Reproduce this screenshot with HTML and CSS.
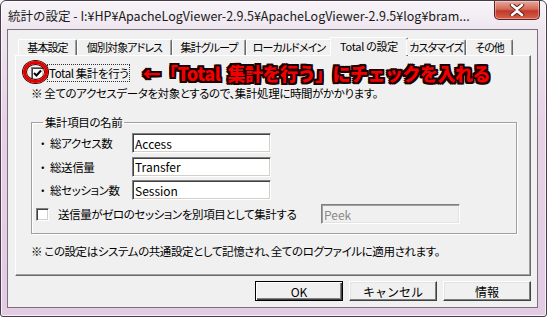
FILE: index.html
```html
<!DOCTYPE html>
<html lang="ja">
<head>
  <meta charset="UTF-8">
  <title>統計の設定</title>
  <link rel="stylesheet" href="styles.css">
</head>
<body>

  <div class="window">
    <div class="titlebar">
      <span class="title">統計の設定 - I:¥HP¥ApacheLogViewer-2.9.5¥ApacheLogViewer-2.9.5¥log¥bram...</span>
      <button class="close-btn" type="button">
        <svg width="16" height="12" viewBox="0 0 16 12">
          <path d="M3 1 L8 5 L13 1 M3 11 L8 7 L13 11" fill="none" stroke="#5a1a14" stroke-width="4.4" stroke-linecap="round"/>
          <path d="M3 1 L8 5 L13 1 M3 11 L8 7 L13 11" fill="none" stroke="#fff" stroke-width="2.6" stroke-linecap="round"/>
        </svg>
      </button>
    </div>

    <div class="client">
      <div class="tabs">
        <div class="tab" style="width: 59px">基本設定</div>
        <div class="tab" style="width: 95px">個別対象アドレス</div>
        <div class="tab" style="width: 74px">集計グループ</div>
        <div class="tab" style="width: 86px">ローカルドメイン</div>
        <div class="tab active" style="width: 78px">Total の設定</div>
        <div class="tab" style="width: 60px">カスタマイズ</div>
        <div class="tab" style="width: 47px">その他</div>
      </div>

      <div class="panel">
        <div class="check-row">
          <span class="checkbox checked">
            <svg width="9" height="9" viewBox="0 0 9 9"><path d="M1 4 L3.5 6.5 L8 1.5" fill="none" stroke="#000" stroke-width="2"/></svg>
          </span>
          <span class="focus-label">Total 集計を行う</span>
          <span class="red-circle"></span>
          <span class="annotation">←「Total&nbsp; 集計を行う」にチェックを入れる</span>
        </div>
        <p class="note">※ 全てのアクセスデータを対象とするので、集計処理に時間がかかります。</p>

        <fieldset class="group">
          <legend>集計項目の名前</legend>
          <div class="field-row">
            <label><span class="bullet">・</span>総アクセス数</label>
            <input class="text-input" type="text" value="Access">
          </div>
          <div class="field-row">
            <label><span class="bullet">・</span>総送信量</label>
            <input class="text-input" type="text" value="Transfer">
          </div>
          <div class="field-row">
            <label><span class="bullet">・</span>総セッション数</label>
            <input class="text-input" type="text" value="Session">
          </div>
          <div class="option-row">
            <span class="checkbox"></span>
            <span class="option-label">送信量がゼロのセッションを別項目として集計する</span>
            <input class="text-input disabled" type="text" value="Peek" disabled>
          </div>
        </fieldset>

        <p class="note bottom-note">※ この設定はシステムの共通設定として記憶され、全てのログファイルに適用されます。</p>
      </div>

      <div class="buttons">
        <button class="btn default" type="button">OK</button>
        <button class="btn" type="button">キャンセル</button>
        <button class="btn" type="button">情報</button>
      </div>
    </div>
  </div>

</body>
</html>
```

FILE: styles.css
```css
/* Reset */
* {
  margin: 0;
  padding: 0;
  box-sizing: border-box;
}

body {
  width: 547px;
  height: 317px;
  overflow: hidden;
  background: #fff;
  font-family: "Noto Sans CJK JP", sans-serif;
  font-size: 11.5px;
  letter-spacing: -0.4px;
  font-feature-settings: "palt";
  color: #000;
}

/* Window frame */
.window {
  width: 547px;
  height: 317px;
  border: 1px solid #4a3a4c;
  border-radius: 6px 6px 3px 3px;
  background: linear-gradient(180deg, #f7f4f8 0, #efe6f0 28px, #e6d2e6 120px, #e2cbe3 100%);
  box-shadow: inset 0 0 0 1px rgba(255, 255, 255, 0.7);
  display: flex;
  flex-direction: column;
}

.titlebar {
  height: 28px;
  display: flex;
  align-items: flex-start;
  justify-content: space-between;
  padding-left: 7px;
}

.title {
  margin-top: 5px;
  font-feature-settings: normal;
  font-size: 12.5px;
  letter-spacing: 0;
  color: #1a1a1a;
  white-space: nowrap;
}

.close-btn {
  width: 46px;
  height: 19px;
  margin-right: 6px;
  border: 1px solid #5c2220;
  border-top: none;
  border-radius: 0 0 5px 5px;
  background: linear-gradient(180deg, #e9a99b 0, #d46a57 45%, #c0392a 55%, #d8604a 100%);
  box-shadow: inset 0 0 0 1px rgba(255, 255, 255, 0.35);
  display: flex;
  align-items: center;
  justify-content: center;
}

/* Client area */
.client {
  flex: 1;
  margin: 0 8px 8px 6px;
  border: 1px solid #7d6f80;
  background: #f0f0f0;
  padding: 7px 6px 0 7px;
  display: flex;
  flex-direction: column;
}

/* Tabs */
.tabs {
  display: flex;
  align-items: flex-end;
  height: 18px;
  padding-left: 3px;
  position: relative;
  z-index: 1;
}

.tab {
  height: 16px;
  line-height: 15px;
  font-size: 11px;
  letter-spacing: -0.9px;
  display: flex;
  justify-content: center;
  background: #f0f0f0;
  border-top: 1px solid #fff;
  border-left: 1px solid #fff;
  border-right: 1px solid #696969;
  box-shadow: inset -1px 0 0 #a0a0a0;
  border-radius: 2px 2px 0 0;
  white-space: nowrap;
}

.tab.active {
  height: 19px;
  margin: 0 -2px -1px;
  padding-top: 1px;
  letter-spacing: -0.3px;
}

/* Tab panel */
.panel {
  width: 516px;
  height: 221px;
  border-top: 1px solid #fff;
  border-left: 1px solid #fff;
  border-right: 1px solid #696969;
  border-bottom: 1px solid #696969;
  box-shadow: inset -1px -1px 0 #a0a0a0;
  padding: 8px 0 0 15px;
  position: relative;
}

.check-row {
  display: flex;
  align-items: center;
  height: 18px;
  position: relative;
}

.checkbox {
  width: 13px;
  height: 13px;
  background: #fff;
  border-top: 1px solid #808080;
  border-left: 1px solid #808080;
  border-right: 1px solid #fff;
  border-bottom: 1px solid #fff;
  box-shadow: inset 1px 1px 0 #404040, inset -1px -1px 0 #d4d0c8;
  display: flex;
  align-items: center;
  justify-content: center;
  flex-shrink: 0;
}

.focus-label {
  margin-left: 3px;
  padding: 0 1px;
  height: 18px;
  line-height: 17px;
  border: 1px dotted #333;
  white-space: nowrap;
}

.red-circle {
  position: absolute;
  left: -8px;
  top: -3px;
  width: 25px;
  height: 22px;
  border: 3px solid #e30000;
  border-radius: 50%;
  box-shadow: 0 0 0 1px #4a0000, inset 0 0 0 1px #4a0000;
}

.annotation {
  margin-left: 12px;
  font-size: 18px;
  font-weight: 900;
  letter-spacing: -0.5px;
  font-feature-settings: normal;
  line-height: 18px;
  color: #f00000;
  white-space: nowrap;
  text-shadow:
    -2px -2px 0 #1a0000, 2px -2px 0 #1a0000, -2px 2px 0 #1a0000, 2px 2px 0 #1a0000,
    0 -2px 0 #1a0000, 0 2px 0 #1a0000, -2px 0 0 #1a0000, 2px 0 0 #1a0000;
}

.note {
  margin-top: 4px;
  line-height: 15px;
  white-space: nowrap;
}

/* Group box */
.group {
  width: 486px;
  height: 119px;
  margin-top: 14px;
  border: 1px solid #a0a0a0;
  box-shadow: 1px 1px 0 #fff, inset 1px 1px 0 #fff;
  padding: 4px 0 0 6px;
}

.group legend {
  margin-left: 5px;
  padding: 0 2px;
  line-height: 14px;
}

.field-row {
  display: flex;
  align-items: center;
  height: 20px;
  margin-bottom: 3.5px;
}

.field-row label {
  width: 94px;
  white-space: nowrap;
}

.bullet {
  display: inline-block;
  width: 15px;
  text-align: center;
  margin-left: -3px;
}

.text-input {
  width: 139px;
  height: 20px;
  font-family: "Noto Sans CJK JP", sans-serif;
  font-size: 12px;
  padding: 0 2px;
  color: #000;
  background: #fff;
  border-top: 1px solid #808080;
  border-left: 1px solid #808080;
  border-right: 1px solid #fff;
  border-bottom: 1px solid #fff;
  box-shadow: inset 1px 1px 0 #404040, inset -1px -1px 0 #d4d0c8;
  outline: none;
}

.text-input.disabled {
  background: #f0f0f0;
  color: #8a8a8a;
  box-shadow: inset 1px 1px 0 #a0a0a0, inset -1px -1px 0 #e3e3e3;
}

.option-row {
  display: flex;
  align-items: center;
  height: 21px;
  margin-top: 1px;
}

.option-row .checkbox {
  margin-left: -2px;
}

.option-label {
  margin-left: 9px;
  width: 263px;
  white-space: nowrap;
}

.bottom-note {
  margin-top: 10px;
}

/* Dialog buttons */
.buttons {
  display: flex;
  justify-content: flex-end;
  gap: 6px;
  margin-top: 5px;
}

.btn {
  width: 88px;
  height: 20px;
  font-family: "Noto Sans CJK JP", sans-serif;
  font-size: 12px;
  background: #f0f0f0;
  border-top: 1px solid #fff;
  border-left: 1px solid #fff;
  border-right: 1px solid #404040;
  border-bottom: 1px solid #404040;
  box-shadow: inset -1px -1px 0 #808080, inset 1px 1px 0 #e3e3e3;
}

.btn.default {
  border: 1px solid #000;
  box-shadow: inset 1px 1px 0 #fff, inset -1px -1px 0 #404040, inset -2px -2px 0 #808080;
}
```
